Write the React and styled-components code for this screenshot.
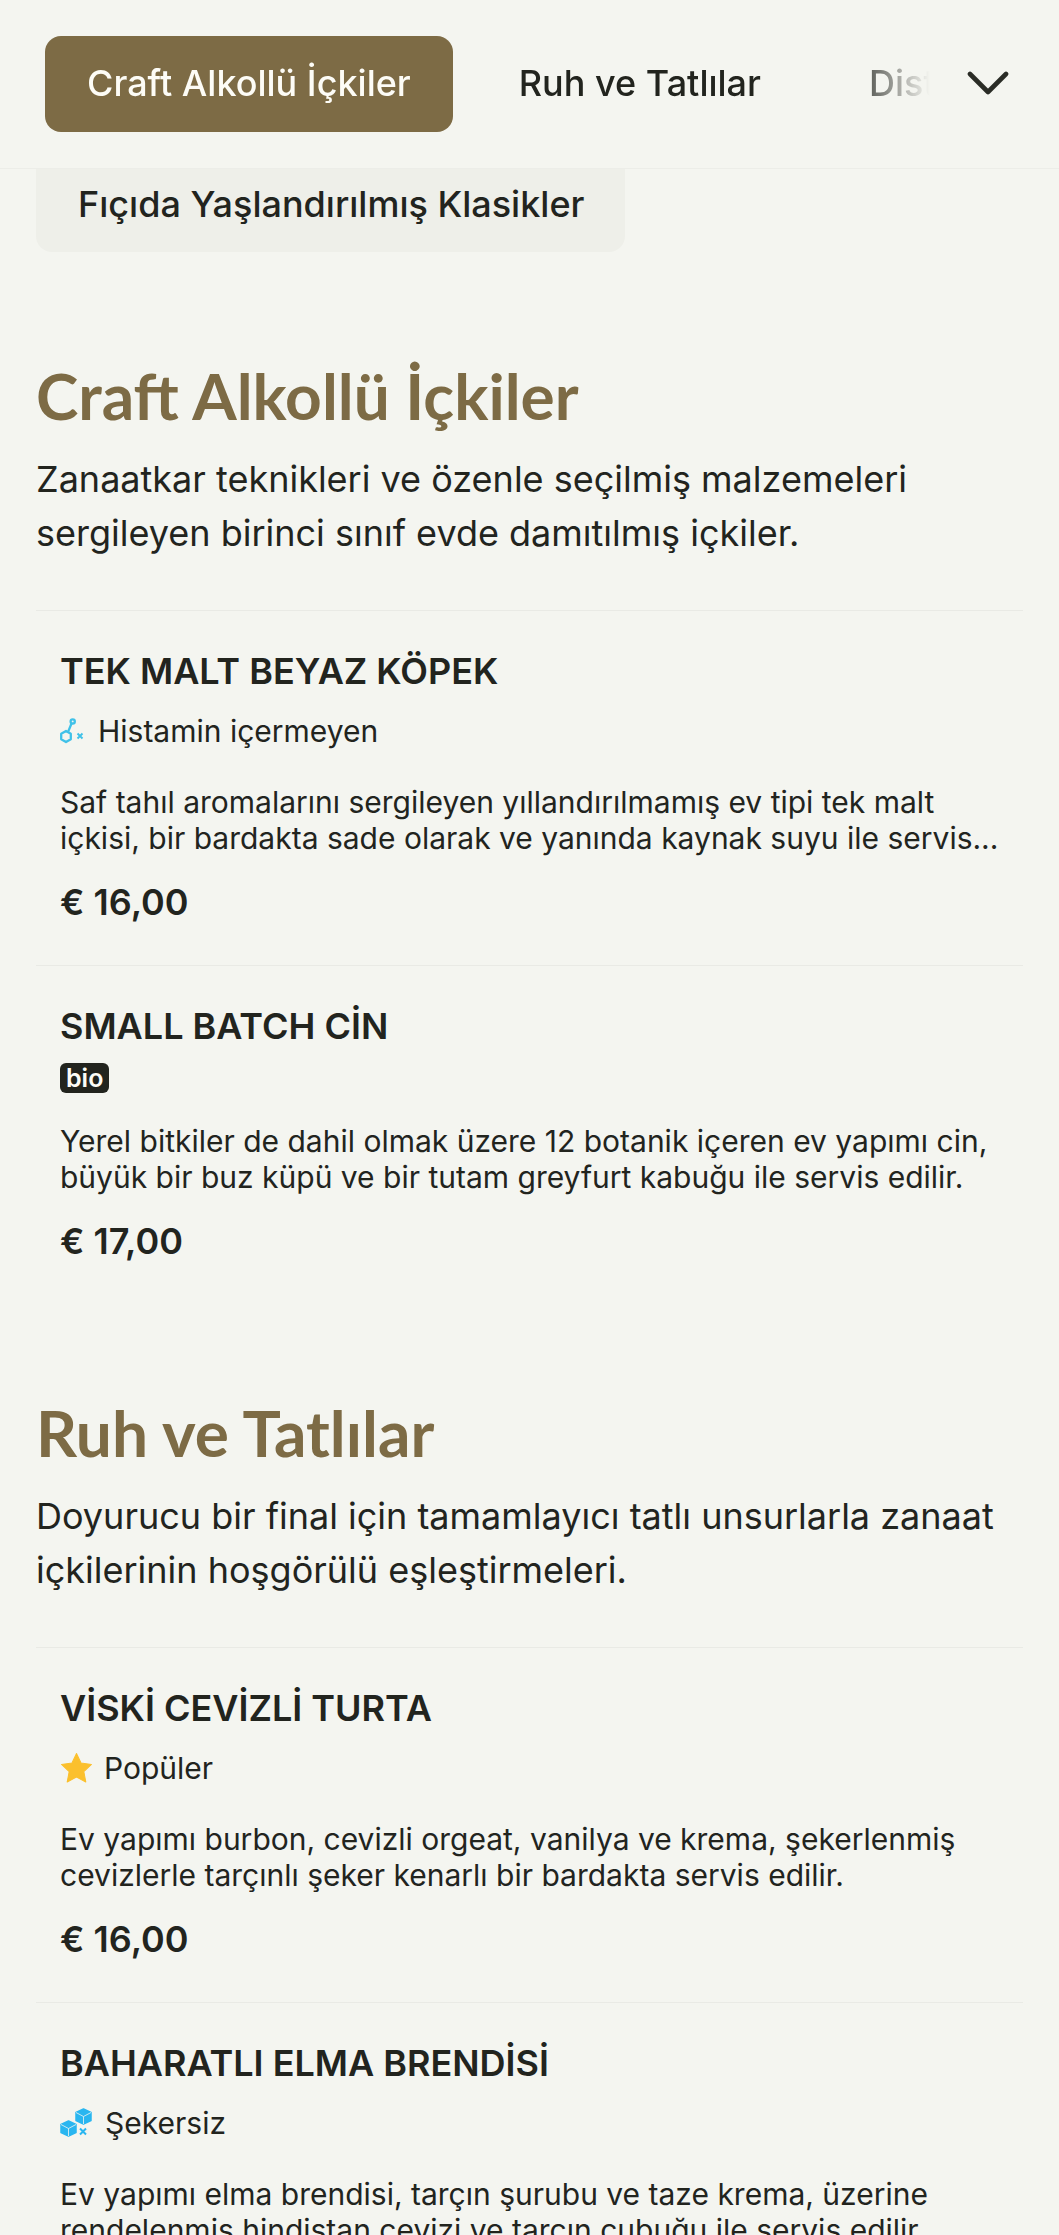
import React from 'react'
import styled, { createGlobalStyle } from 'styled-components'

const GlobalStyle = createGlobalStyle`
html, body {
    margin: 0;
    height: 2235px;
    overflow: hidden;
    background: #f4f5f0;
}
body {
    font-family: Inter, "Liberation Sans", sans-serif;
    color: #22241e;
}
`;

const Header = styled.header`
position: relative;
z-index: 2;
height: 169px;
box-sizing: border-box;
padding: 36px 50px 36px 45px;
display: flex;
align-items: center;
background: #f4f5f0;
border-bottom: 1px solid #ecede8;
`;
const Tabs = styled.nav`
flex: 1;
min-width: 0;
display: flex;
gap: 24px;
overflow: hidden;
-webkit-mask-image: linear-gradient(to right, #000 800px, transparent 885px);
mask-image: linear-gradient(to right, #000 800px, transparent 885px);
`;
const Tab = styled.div`
flex: none;
height: 96px;
box-sizing: border-box;
padding: 0 42px 2px;
display: flex;
align-items: center;
border-radius: 16px;
font-size: 36px;
font-weight: 500;
white-space: nowrap;
color: ${(p) => (p.$active ? '#fdfcf6' : '#22241e')};
background: ${(p) => (p.$active ? '#7d6b45' : 'transparent')};
`;
const ChevronIcon = styled.svg`
flex: none;
margin: 0 0 2px 30px;
`;

const Main = styled.main`
padding: 0 36px;
`;
const SubNav = styled.div`
margin-top: -20px;
width: 589px;
height: 103px;
box-sizing: border-box;
padding: 6px 42px 0;
display: flex;
align-items: center;
border-radius: 16px;
background: #eeefe9;
font-size: 36px;
font-weight: 500;
white-space: nowrap;
`;
const Section = styled.section`
margin-top: ${(p) => p.$top}px;
`;
const SectionTitle = styled.h2`
margin: 0;
font-family: Lato, "Liberation Sans", sans-serif;
font-size: 64px;
font-weight: 700;
line-height: 80px;
color: #7d6b45;
`;
const SectionText = styled.p`
margin: 16px 0 0;
font-size: 36px;
line-height: 54px;
`;
const List = styled.div`
margin-top: 50px;
`;
const Item = styled.article`
border-top: 1px solid #e9eae5;
padding: 36px 24px 39px;
`;
const ItemTitle = styled.h3`
margin: 0;
font-size: 36px;
font-weight: 600;
line-height: 48px;
`;
const Tag = styled.div`
margin-top: 13px;
display: flex;
align-items: center;
gap: ${(p) => p.$gap || 12}px;
font-size: 30px;
line-height: 46px;
`;
const BioBadge = styled.span`
padding: 0 6px;
height: 30px;
display: flex;
align-items: center;
border-radius: 6px;
background: #22241e;
color: #fdfcf6;
font-size: 25px;
font-weight: 600;
`;
const ItemText = styled.p`
margin: 30px 0 0;
font-size: 30px;
line-height: 36px;
`;
const Price = styled.div`
margin-top: 22px;
font-size: 36px;
font-weight: 600;
line-height: 48px;
`;

const HistamineIcon = () => (
    <svg width="26" height="26" viewBox="0 0 26 26" fill="none" stroke="#3fc1e8" strokeWidth="2.3" strokeLinejoin="round">
        <circle cx="12.7" cy="3.4" r="2.1" />
        <path d="M8.2 13.6 L11.6 5.2" />
        <path d="M6 13 L10.8 15.8 V21.2 L6 24 L1.2 21.2 V15.8 Z" />
        <path d="M17.5 15.5 L22.5 20.5 M22.5 15.5 L17.5 20.5" strokeWidth="1.9" />
    </svg>
)

const StarIcon = () => (
    <svg width="33" height="32" viewBox="0 0 32 31">
        <path d="M16 1.5 L20.4 10.6 L30.5 12 L23.1 19 L25 29 L16 24.2 L7 29 L8.9 19 L1.5 12 L11.6 10.6 Z" fill="#fbc02d" stroke="#fbc02d" strokeWidth="1" strokeLinejoin="round" />
    </svg>
)

const SugarIcon = () => (
    <svg width="33" height="30" viewBox="0 0 32 30">
        <g fill="#29b6f0" stroke="#29b6f0" strokeWidth="1.5" strokeLinejoin="round">
            <path d="M23 1 L30.5 4.5 V12.5 L23 16 L15.5 12.5 V4.5 Z" />
            <path d="M8 13 L15.5 16.5 V24.5 L8 28 L0.5 24.5 V16.5 Z" />
        </g>
        <path d="M23 8.5 V16 M23 8.5 L15.5 4.5 M23 8.5 L30.5 4.5" stroke="#f4f5f0" strokeWidth="0.8" fill="none" />
        <path d="M8 20.5 V28 M8 20.5 L0.5 16.5 M8 20.5 L15.5 16.5" stroke="#f4f5f0" strokeWidth="0.8" fill="none" />
        <path d="M19.5 20.5 L25.5 26.5 M25.5 20.5 L19.5 26.5" stroke="#29b6f0" strokeWidth="2" fill="none" />
    </svg>
)

const sections = [
    {
        title: 'Craft Alkollü İçkiler',
        top: 104,
        text: ['Zanaatkar teknikleri ve özenle seçilmiş malzemeleri', 'sergileyen birinci sınıf evde damıtılmış içkiler.'],
        items: [
            {
                name: 'TEK MALT BEYAZ KÖPEK',
                icon: <HistamineIcon />,
                tag: 'Histamin içermeyen',
                lines: ['Saf tahıl aromalarını sergileyen yıllandırılmamış ev tipi tek malt', 'içkisi, bir bardakta sade olarak ve yanında kaynak suyu ile servis...'],
                price: '€ 16,00',
            },
            {
                name: 'SMALL BATCH CİN',
                bio: true,
                lines: ['Yerel bitkiler de dahil olmak üzere 12 botanik içeren ev yapımı cin,', 'büyük bir buz küpü ve bir tutam greyfurt kabuğu ile servis edilir.'],
                price: '€ 17,00',
            },
        ],
    },
    {
        title: 'Ruh ve Tatlılar',
        top: 89,
        text: ['Doyurucu bir final için tamamlayıcı tatlı unsurlarla zanaat', 'içkilerinin hoşgörülü eşleştirmeleri.'],
        items: [
            {
                name: 'VİSKİ CEVİZLİ TURTA',
                icon: <StarIcon />,
                gap: 11,
                tag: 'Popüler',
                lines: ['Ev yapımı burbon, cevizli orgeat, vanilya ve krema, şekerlenmiş', 'cevizlerle tarçınlı şeker kenarlı bir bardakta servis edilir.'],
                price: '€ 16,00',
            },
            {
                name: 'BAHARATLI ELMA BRENDİSİ',
                icon: <SugarIcon />,
                gap: 12,
                tag: 'Şekersiz',
                lines: ['Ev yapımı elma brendisi, tarçın şurubu ve taze krema, üzerine', 'rendelenmiş hindistan cevizi ve tarçın çubuğu ile servis edilir.'],
                price: '€ 16,00',
            },
        ],
    },
]

export default function App() {
    return (
        <>
            <GlobalStyle />
            <Header>
                <Tabs>
                    <Tab $active>Craft Alkollü İçkiler</Tab>
                    <Tab>Ruh ve Tatlılar</Tab>
                    <Tab>Distile Özel</Tab>
                </Tabs>
                <ChevronIcon width="42" height="26" viewBox="0 0 42 26" fill="none" stroke="#2a2c26" strokeWidth="4.6" strokeLinecap="round" strokeLinejoin="round">
                    <path d="M3 4 L21 22 L39 4" />
                </ChevronIcon>
            </Header>
            <Main>
                <SubNav>Fıçıda Yaşlandırılmış Klasikler</SubNav>
                {sections.map((section) => (
                    <Section key={section.title} $top={section.top}>
                        <SectionTitle>{section.title}</SectionTitle>
                        <SectionText>{section.text[0]}<br />{section.text[1]}</SectionText>
                        <List>
                            {section.items.map((item) => (
                                <Item key={item.name}>
                                    <ItemTitle>{item.name}</ItemTitle>
                                    <Tag $gap={item.gap}>
                                        {item.bio ? <BioBadge>bio</BioBadge> : item.icon}
                                        {item.tag}
                                    </Tag>
                                    <ItemText>{item.lines[0]}<br />{item.lines[1]}</ItemText>
                                    <Price>{item.price}</Price>
                                </Item>
                            ))}
                        </List>
                    </Section>
                ))}
            </Main>
        </>
    )
}
